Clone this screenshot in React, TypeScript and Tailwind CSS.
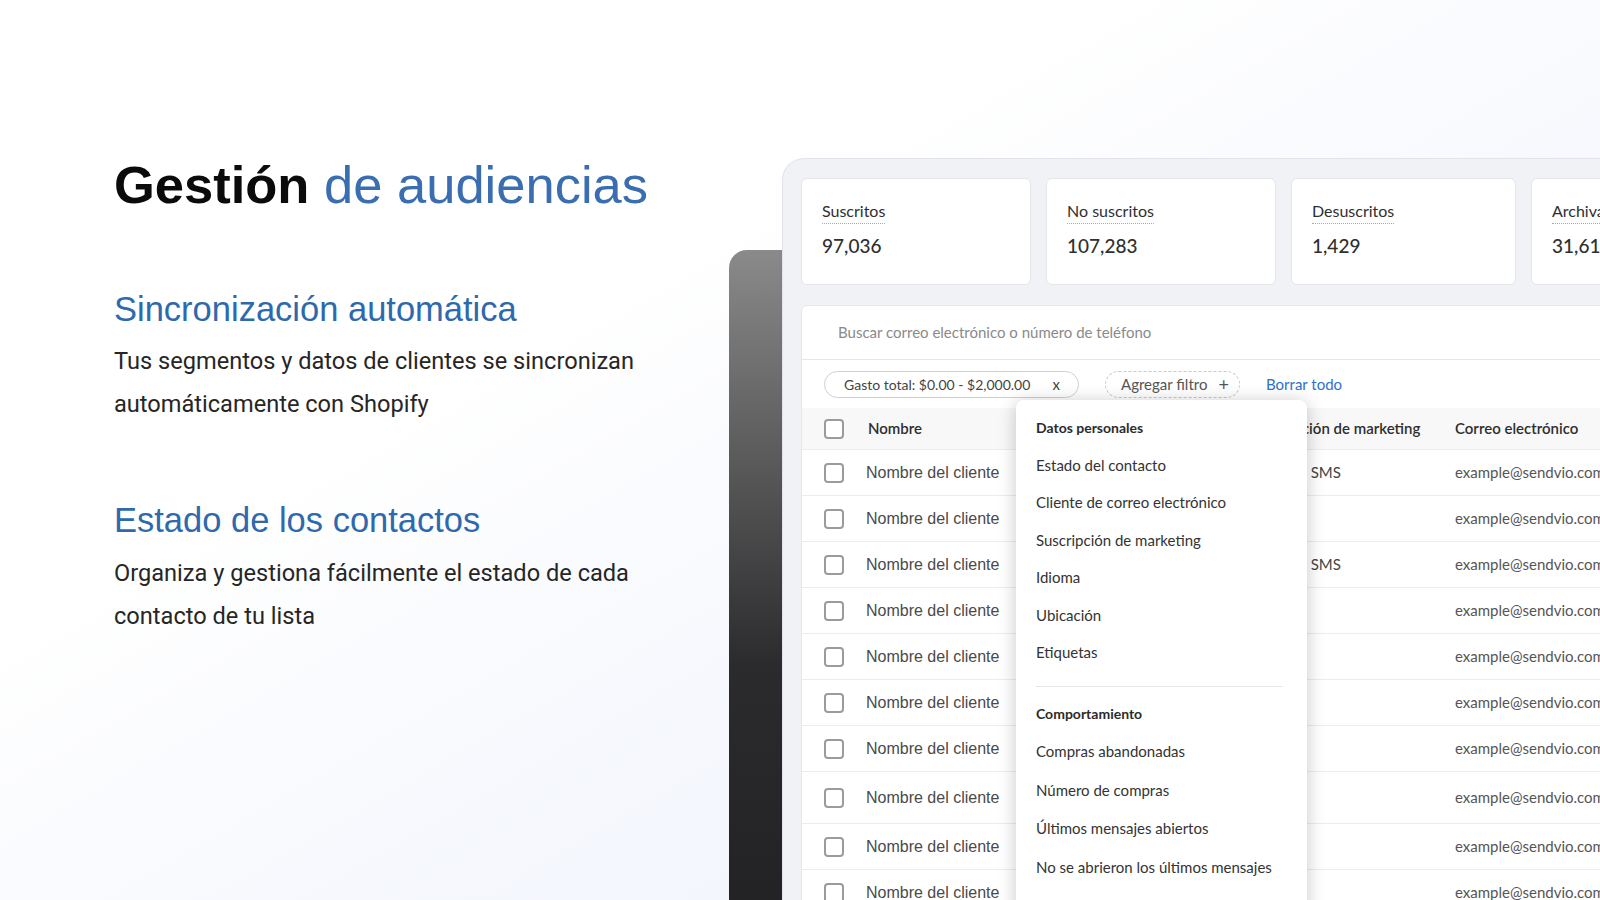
import React from "react";

const rows = [
  { sms: true, h: "h-[46px]" },
  { sms: false, h: "h-[46px]" },
  { sms: true, h: "h-[46px]" },
  { sms: false, h: "h-[46px]" },
  { sms: false, h: "h-[46px]" },
  { sms: false, h: "h-[46px]" },
  { sms: false, h: "h-[46px]" },
  { sms: false, h: "h-[52px]" },
  { sms: false, h: "h-[46px]" },
  { sms: false, h: "h-[46px]" },
];

function Checkbox() {
  return <div className="h-[20px] w-[20px] rounded-[4px] border-2 border-[#9b9b9b] bg-white" />;
}

function StatCard({ label, value, w }: { label: string; value: string; w: string }) {
  return (
    <div className={`h-[107px] ${w} shrink-0 rounded-[6px] border border-[#e4e6ea] bg-white pl-[20px] pt-[20px] font-['Lato'] text-[#2f2f2f]`}>
      <div className="inline-block border-b border-dotted border-[#a9a9a9] pb-[2px] text-[16px] leading-[20px]">{label}</div>
      <div className="mt-[10px] text-[19px] leading-[24px] font-medium">{value}</div>
    </div>
  );
}

export default function App() {
  const personal = [
    "Estado del contacto",
    "Cliente de correo electrónico",
    "Suscripción de marketing",
    "Idioma",
    "Ubicación",
    "Etiquetas",
  ];
  const behaviour = [
    "Compras abandonadas",
    "Número de compras",
    "Últimos mensajes abiertos",
    "No se abrieron los últimos mensajes",
  ];
  return (
    <div className="relative flex h-[900px] w-[1600px] overflow-hidden bg-[linear-gradient(150deg,#ffffff_35%,#f6f8fd_60%,#edf3fc_100%)]">
      {/* Left text column */}
      <div className="w-[729px] shrink-0 pl-[114px] pt-[159px]">
        <h1 className="whitespace-nowrap font-['Liberation_Sans'] text-[52.5px] leading-none">
          <span className="font-bold text-[#0b0b0b]">Gestión</span>{" "}
          <span className="text-[#3a6eb0]">de audiencias</span>
        </h1>
        <h2 className="mt-[80px] whitespace-nowrap font-['Liberation_Sans'] text-[34.5px] leading-none text-[#2f69ad]">
          Sincronización automática
        </h2>
        <p className="mt-[14px] w-[540px] font-['Roboto'] text-[23.6px] leading-[43px] text-[#262626]">
          Tus segmentos y datos de clientes se sincronizan automáticamente con Shopify
        </p>
        <h2 className="mt-[77px] whitespace-nowrap font-['Liberation_Sans'] text-[34.5px] leading-none text-[#2f69ad]">
          Estado de los contactos
        </h2>
        <p className="mt-[14px] w-[540px] font-['Roboto'] text-[23.6px] leading-[43px] text-[#262626]">
          Organiza y gestiona fácilmente el estado de cada contacto de tu lista
        </p>
      </div>

      {/* Right mockup */}
      <div className="relative flex-1 pt-[158px]">
        <div className="absolute bottom-0 left-0 top-[250px] w-[120px] rounded-tl-[18px] bg-[linear-gradient(to_bottom,#8a8a8a_0%,#2b2b2d_64%,#232325_100%)]" />
        <div className="relative ml-[53px] h-[760px] w-[900px] rounded-tl-[22px] border-l border-t border-[#e0e4ea] bg-[#f1f2f5] pl-[18px] pt-[19px]">
          <div className="flex gap-[15px]">
            <StatCard label="Suscritos" value="97,036" w="w-[230px]" />
            <StatCard label="No suscritos" value="107,283" w="w-[230px]" />
            <StatCard label="Desuscritos" value="1,429" w="w-[225px]" />
            <StatCard label="Archivados" value="31,614" w="w-[230px]" />
          </div>

          <div className="relative mt-[20px] h-[620px] w-[880px] rounded-[6px] border border-[#e4e6ea] bg-white font-['Lato']">
            <div className="flex h-[54px] items-center border-b border-[#e6e6e8] pl-[36px] text-[15px] text-[#8a8a8a]">
              Buscar correo electrónico o número de teléfono
            </div>
            <div className="flex h-[48px] items-center pl-[22px] text-[14px]">
              <div className="flex h-[27px] w-[255px] items-center justify-between rounded-full border border-[#cfcfcf] pl-[19px] pr-[18px] text-[#444]">
                <span>Gasto total: $0.00 - $2,000.00</span>
                <span className="text-[15px]">x</span>
              </div>
              <div className="ml-[26px] flex h-[27px] w-[135px] items-center justify-between rounded-full border border-dashed border-[#c8c8c8] pl-[15px] pr-[10px] text-[15px] text-[#555]">
                <span>Agregar filtro</span>
                <span className="text-[18px] leading-none">+</span>
              </div>
              <span className="ml-[26px] text-[15px] text-[#2f6fd3]">Borrar todo</span>
            </div>

            <div className="flex h-[42px] items-center border-b border-[#ececec] bg-[#f8f8f9] text-[15px] font-semibold text-[#2e2e2e]">
              <div className="w-[64px] shrink-0 pl-[22px]">
                <Checkbox />
              </div>
              <div className="w-[388px] shrink-0 pl-[2px]">Nombre</div>
              <div className="w-[201px] shrink-0 whitespace-nowrap">Suscripción de marketing</div>
              <div className="whitespace-nowrap">Correo electrónico</div>
            </div>

            {rows.map((r, i) => (
              <div key={i} className={`flex ${r.h} items-center border-b border-[#ececec]`}>
                <div className="w-[64px] shrink-0 pl-[22px]">
                  <Checkbox />
                </div>
                <div className="w-[388px] shrink-0 font-['Liberation_Sans'] text-[16px] text-[#4a4a4a]">
                  Nombre del cliente
                </div>
                <div className="w-[201px] shrink-0 whitespace-nowrap pl-[14px] text-[15px] text-[#444]">
                  {r.sms ? "Email, SMS" : ""}
                </div>
                <div className="whitespace-nowrap text-[15px] text-[#555]">example@sendvio.com</div>
              </div>
            ))}

            {/* Dropdown menu */}
            <div className="absolute left-[214px] top-[94px] h-[520px] w-[291px] rounded-[8px] bg-white pl-[20px] pr-[24px] pt-[8px] shadow-[0_2px_18px_rgba(0,0,0,0.22)]">
              <div className="flex h-[38px] items-center text-[14px] font-bold text-[#2b2b2b]">Datos personales</div>
              {personal.map((p) => (
                <div key={p} className="flex h-[37.5px] items-center text-[15px] text-[#333]">
                  {p}
                </div>
              ))}
              <div className="mt-[15px] border-t border-[#e6e6e6]" />
              <div className="mt-[7px] flex h-[38px] items-center text-[14px] font-bold text-[#2b2b2b]">Comportamiento</div>
              {behaviour.map((p) => (
                <div key={p} className="flex h-[38.5px] items-center whitespace-nowrap text-[15px] text-[#333]">
                  {p}
                </div>
              ))}
            </div>
          </div>
        </div>
      </div>
    </div>
  );
}
